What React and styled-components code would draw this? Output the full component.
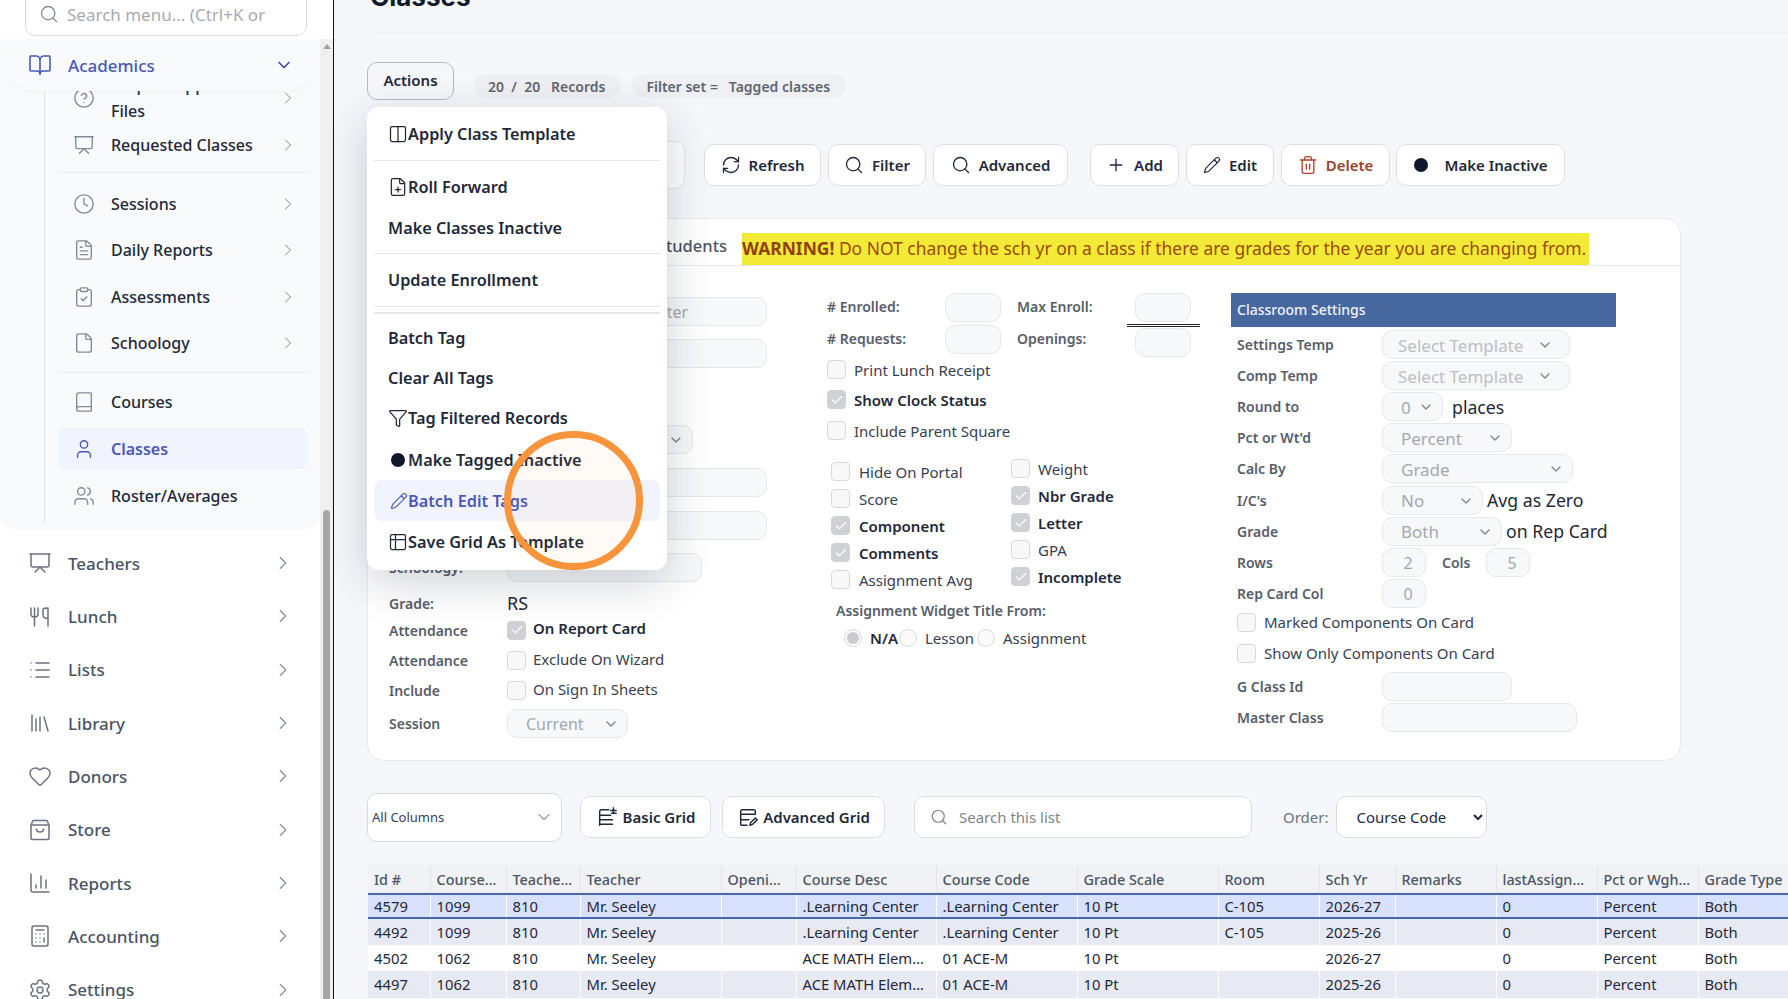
import React from 'react';
import styled, { createGlobalStyle } from 'styled-components';
import {
  BookOpen, ChevronDown, ChevronRight, CircleHelp, Presentation, Clock, FileText, ClipboardCheck,
  File, Book, User, Users, List, Library, Heart, ChartColumn, Calculator, Settings, Search,
  RefreshCw, Plus, Pencil, Trash2, Check, Columns2, FilePlus, Funnel, Table2,
} from 'lucide-react';

const GlobalStyle = createGlobalStyle`
  html, body { margin: 0; padding: 0; height: 100%; overflow: hidden; }
  body { font-family: "Noto Sans", "Open Sans", sans-serif; background: #f6f7fb; color: #1f2937; }
  * { box-sizing: border-box; }
`;

const Shell = styled.div`
  display: flex;
  width: 1788px;
  height: 999px;
  overflow: hidden;
`;

/* ---------- sidebar ---------- */

const Sidebar = styled.aside`
  width: 334px;
  flex-shrink: 0;
  height: 999px;
  background: #fff;
  border-right: 1px solid #111;
  display: flex;
  flex-direction: column;
  overflow: hidden;
`;

const SearchArea = styled.div`
  height: 39px;
  flex-shrink: 0;
  padding: 0 26px 0 25px;
`;

const SearchBox = styled.div`
  height: 48px;
  margin-top: -12px;
  border: 1px solid #d9dce1;
  border-radius: 10px;
  display: flex;
  align-items: center;
  gap: 8px;
  padding: 4px 0 0 13px;
  font-size: 17px;
  color: #a8abb0;
  background: #fff;
  white-space: nowrap;
`;

const SideBody = styled.div`
  flex: 1;
  display: flex;
  min-height: 0;
`;

const NavCol = styled.div`
  width: 320px;
  flex-shrink: 0;
`;

const ScrollTrack = styled.div`
  width: 13px;
  background: #f0f0f0;
  padding: 5px 3px 0;
  display: flex;
  flex-direction: column;
  align-items: center;
`;

const ScrollArrow = styled.div`
  width: 0;
  height: 0;
  border-left: 4px solid transparent;
  border-right: 4px solid transparent;
  border-bottom: 5px solid #a3a3a3;
`;

const ScrollThumb = styled.div`
  width: 7px;
  height: 489px;
  margin-top: 461px;
  background: #a6a6a6;
  border-radius: 4px 4px 0 0;
`;

const AcademicSection = styled.div`
  height: 491px;
  margin-bottom: 6.5px;
  background: #f8fafc;
  border-radius: 0 0 18px 18px;
  position: relative;
  overflow: hidden;
`;

const AcademicHead = styled.div`
  height: 52px;
  margin-left: 12px;
  width: 296px;
  padding: 0 14px 0 16px;
  display: flex;
  align-items: center;
  gap: 16px;
  color: #4a59b5;
  font-size: 17px;
  font-weight: 500;
  background: #f8fafc;
  border-radius: 0 0 18px 18px;
  box-shadow: 0 1px 2px rgba(15, 23, 42, 0.04);
  position: relative;
  z-index: 2;
  svg:last-child { margin-left: auto; color: #3f4aa8; }
`;

const SubList = styled.div`
  margin-left: 44px;
  height: 444px;
  margin-top: -13px;
  border-left: 1px solid #dde1e7;
  overflow: hidden;
  padding: 1.5px 11px 0 13px;
`;

const SubItem = styled.div`
  height: 41px;
  margin-top: ${(p) => p.$mt ?? 5.6}px;
  padding: 0 10px 0 15px;
  width: 250px;
  display: flex;
  align-items: center;
  gap: 16px;
  border-radius: 8px;
  font-size: 16px;
  line-height: 26px;
  color: ${(p) => (p.$active ? '#4a59b5' : '#1f2937')};
  background: ${(p) => (p.$active ? '#f1f4fd' : 'transparent')};
  font-weight: ${(p) => (p.$active ? 600 : 500)};
  > svg:first-child { color: ${(p) => (p.$active ? '#4a59b5' : '#858a94')}; flex-shrink: 0; }
`;

const SubArrow = styled(ChevronRight)`
  margin-left: auto;
  color: #9a9ea6;
  flex-shrink: 0;
`;

const SubDivider = styled.div`
  height: 1px;
  width: 253px;
  background: #e9ecf0;
  margin-top: ${(p) => p.$mt ?? 7}px;
  margin-bottom: ${(p) => p.$mb ?? 4}px;
`;

const TopItem = styled.div`
  height: 53.33px;
  padding: 0 26px 0 28px;
  display: flex;
  align-items: center;
  gap: 16px;
  font-size: 17px;
  font-weight: 500;
  color: #4b5563;
  > svg:first-child { color: #6b7280; flex-shrink: 0; }
`;

const TopArrow = styled(ChevronRight)`
  margin-left: auto;
  color: #868b94;
`;

/* ---------- main ---------- */

const Main = styled.main`
  flex: 1;
  min-width: 0;
  height: 999px;
  position: relative;
  overflow: hidden;
  padding-left: 33px;
`;

const PageTitle = styled.h1`
  margin: -26px 0 0 3px;
  height: 60px;
  line-height: 46px;
  font-family: Inter, sans-serif;
  font-size: 26px;
  font-weight: 700;
  color: #111827;
  border-bottom: 1px solid #eceef2;
`;

const ActionRow = styled.div`
  display: flex;
  align-items: flex-end;
  gap: 20px;
  margin-top: 28px;
  height: 38px;
`;

const ActionsWrap = styled.div`
  position: relative;
  width: 87px;
  height: 38px;
`;

const ActionsButton = styled.div`
  height: 38px;
  width: 87px;
  border: 1px solid #b6bac2;
  border-radius: 10px;
  display: flex;
  align-items: center;
  justify-content: center;
  font-weight: 600;
  font-size: 15px;
  padding-bottom: 3px;
`;

const Chips = styled.div`
  display: flex;
  gap: 11px;
  margin-bottom: 2px;
`;

const Chip = styled.div`
  height: 24px;
  border-radius: 12px;
  background: #eff0f4;
  color: #5f6670;
  font-size: 14px;
  font-weight: 600;
  display: flex;
  align-items: center;
  padding: 0 16px 0 14px;
  white-space: pre;
`;

const Menu = styled.div`
  position: absolute;
  top: 45px;
  left: 0;
  width: 300px;
  height: 463px;
  background: #fff;
  border-radius: 12px;
  padding: 6px 7px 0;
  box-shadow: 0 12px 45px rgba(17, 24, 39, 0.2);
  z-index: 10;
`;

const MenuItem = styled.div`
  height: 41px;
  margin-top: ${(p) => p.$mt ?? 0}px;
  display: flex;
  align-items: center;
  padding-left: 14px;
  border-radius: 8px;
  font-size: 16.3px;
  font-weight: 600;
  color: ${(p) => (p.$active ? '#4a59b5' : '#1f2937')};
  background: ${(p) => (p.$active ? '#f1f4fd' : 'transparent')};
  white-space: nowrap;
  svg { flex-shrink: 0; }
`;

const MenuDot = styled.span`
  width: 14px;
  height: 14px;
  margin: 0 3px;
  border-radius: 50%;
  background: #0f172a;
  flex-shrink: 0;
`;

const MenuPencil = styled(Pencil)`
  margin: 0 0 0 2px;
`;

const MenuLine = styled.div`
  height: ${(p) => p.$h ?? 1}px;
  background: #e5e7eb;
  margin-top: ${(p) => p.$mt ?? 5}px;
  margin-bottom: ${(p) => p.$mb ?? 6}px;
`;

const Circle = styled.div`
  position: absolute;
  left: 170px;
  top: 431px;
  width: 139px;
  height: 139px;
  border-radius: 50%;
  border: 7px solid #f7943c;
  background: rgba(247, 148, 60, 0.05);
  z-index: 20;
`;

const Toolbar = styled.div`
  display: flex;
  align-items: center;
  margin-top: 41px;
  height: 48px;
`;

const HiddenSearch = styled.div`
  width: 318px;
  height: 48px;
  background: #fff;
  border: 1px solid #e2e4e9;
  border-radius: 10px;
  margin-right: 19px;
`;

const ToolButton = styled.div`
  width: ${(p) => p.$w}px;
  height: 42px;
  margin-right: ${(p) => p.$mr ?? 7}px;
  background: #fff;
  border: 1px solid #dcdfe4;
  border-radius: 10px;
  display: flex;
  align-items: center;
  justify-content: center;
  gap: ${(p) => p.$gap ?? 8}px;
  font-size: 15px;
  font-weight: 600;
  color: ${(p) => p.$color ?? '#1f2937'};
  white-space: nowrap;
  flex-shrink: 0;
`;

const Dot = styled.span`
  width: 14px;
  height: 14px;
  border-radius: 50%;
  background: #0f172a;
  flex-shrink: 0;
`;

const Card = styled.section`
  width: 1314px;
  height: 543px;
  margin-top: 29px;
  background: #fff;
  border: 1px solid #e7e9ed;
  border-radius: 16px;
`;

const TabRow = styled.div`
  height: 47px;
  display: flex;
  border-bottom: 1px solid #e7e9ed;
`;

const TabList = styled.div`
  width: 374px;
  display: flex;
  justify-content: flex-end;
  align-items: center;
  padding: 6px 15px 0 0;
  font-size: 16.5px;
  font-weight: 500;
  color: #4b5563;
`;

const Warning = styled.div`
  margin-top: 14px;
  height: 32px;
  width: 847px;
  background: #f2ea36;
  color: #9a4a0c;
  font-size: 17.46px;
  line-height: 30px;
  white-space: nowrap;
  b { font-weight: 700; color: #92400e; }
`;

const CardBody = styled.div`
  display: flex;
  align-items: flex-start;
`;

const LeftCol = styled.div`
  width: 459px;
  padding: 31px 0 0 21px;
`;

const MidCol = styled.div`
  width: 404px;
  padding-top: 27px;
`;

const RightCol = styled.div`
  width: 386px;
  padding-top: 27px;
`;

const FormRow = styled.div`
  display: flex;
  align-items: center;
  height: ${(p) => p.$h ?? 29}px;
  margin-top: ${(p) => p.$mt ?? 0}px;
  padding-left: ${(p) => p.$pl ?? 0}px;
`;

const Label = styled.div`
  width: ${(p) => p.$w ?? 118}px;
  margin-left: ${(p) => p.$ml ?? 0}px;
  padding-bottom: ${(p) => p.$lift ?? 0}px;
  flex-shrink: 0;
  font-size: 14px;
  font-weight: 600;
  color: #575e68;
  white-space: nowrap;
`;

const Field = styled.div`
  width: ${(p) => p.$w}px;
  height: 29px;
  flex-shrink: 0;
  background: #f7f8fa;
  border: 1px solid #e4e7eb;
  border-radius: 10px;
  font-size: ${(p) => p.$fs ?? 16}px;
  color: ${(p) => (p.$faint ? '#bcbfc4' : '#a4a8ae')};
  display: flex;
  align-items: center;
  justify-content: ${(p) => (p.$center ? 'center' : 'flex-start')};
  padding: ${(p) => (p.$center ? '2px 0 0 8px' : `1px ${p.$pr ?? 8}px 0 ${p.$pl ?? 15}px`)};
  margin-top: ${(p) => p.$mt ?? 0}px;
  white-space: nowrap;
  svg { margin-left: auto; color: #80858c; flex-shrink: 0; }
`;

const BoxMark = styled.span`
  width: 19px;
  height: 19px;
  flex-shrink: 0;
  border-radius: 4px;
  background: ${(p) => (p.$on ? '#cfd1d4' : '#f8f8f9')};
  border: 1px solid ${(p) => (p.$on ? '#cfd1d4' : '#d7d9dd')};
  display: inline-flex;
  align-items: center;
  justify-content: center;
  color: #fff;
`;

const CheckRow = styled.div`
  display: flex;
  align-items: center;
  gap: ${(p) => p.$gap ?? 8}px;
  height: ${(p) => p.$h ?? 27}px;
  margin-top: ${(p) => p.$mt ?? 0}px;
  font-size: 15px;
  font-weight: ${(p) => (p.$on ? 600 : 400)};
  color: ${(p) => (p.$on ? '#1f2937' : '#374151')};
  white-space: nowrap;
`;

const CheckText = styled.span`
  margin-bottom: ${(p) => p.$lift ?? 0}px;
`;

const FlagColumns = styled.div`
  display: flex;
  margin-top: 14px;
  padding-left: 4px;
`;

const FlagCol = styled.div`
  width: ${(p) => p.$w}px;
  margin-top: ${(p) => p.$mt ?? 0}px;
`;

const DoubleRule = styled.div`
  position: absolute;
  left: -8px;
  bottom: -5px;
  width: 73px;
  height: 3px;
  border-top: 1px solid #222;
  border-bottom: 1px solid #222;
`;

const RuleAnchor = styled.div`
  position: relative;
`;

const RadioRow = styled.div`
  display: flex;
  align-items: center;
  margin-top: 8px;
  padding-left: 17px;
  height: 20px;
  font-size: 15px;
  color: #374151;
  white-space: nowrap;
`;

const Radio = styled.span`
  width: 18px;
  height: 18px;
  border-radius: 50%;
  border: 1px solid #d7d9dd;
  background: #fafafa;
  margin-right: 8px;
  flex-shrink: 0;
  display: inline-flex;
  align-items: center;
  justify-content: center;
  &::after {
    content: '';
    display: ${(p) => (p.$on ? 'block' : 'none')};
    width: 12px;
    height: 12px;
    border-radius: 50%;
    background: #c9cbcf;
  }
`;

const RadioText = styled.span`
  font-weight: ${(p) => (p.$on ? 600 : 400)};
  color: ${(p) => (p.$on ? '#1f2937' : '#374151')};
  margin-right: ${(p) => p.$mr}px;
`;

const SettingsHead = styled.div`
  height: 34px;
  width: 385px;
  background: #46689f;
  color: #f1f4f9;
  font-size: 14px;
  font-weight: 500;
  line-height: 34px;
  padding-left: 6px;
`;

const SettingRow = styled.div`
  display: flex;
  align-items: center;
  height: 31.1px;
  padding-left: 6px;
  margin-top: ${(p) => p.$mt ?? 0}px;
`;

const Suffix = styled.span`
  font-size: 17.7px;
  color: #1f2937;
  margin-left: ${(p) => p.$ml}px;
  white-space: nowrap;
`;

const ColsLabel = styled(Label)`
  margin: 0 15px 0 16px;
  width: 29px;
`;

const PlainValue = styled.div`
  font-size: 18px;
  color: #1f2937;
`;

/* ---------- grid controls ---------- */

const GridBar = styled.div`
  display: flex;
  align-items: center;
  margin-top: 31px;
  height: 50px;
`;

const ColumnsSelect = styled.div`
  width: 195px;
  height: 49px;
  background: #fff;
  border: 1px solid #d7dae0;
  border-radius: 10px;
  display: flex;
  align-items: center;
  padding: 0 7px 0 4px;
  font-size: 13px;
  color: #374151;
  margin-right: 18px;
  svg { margin-left: auto; color: #6b7280; }
`;

const ListSearch = styled.div`
  width: 338px;
  height: 42px;
  margin-left: 22px;
  background: #fff;
  border: 1px solid #d9dce1;
  border-radius: 10px;
  display: flex;
  align-items: center;
  gap: 11px;
  padding-left: 15px;
  font-size: 15px;
  color: #80858c;
`;

const OrderLabel = styled.span`
  margin: 0 7px 0 31px;
  font-size: 15px;
  color: #6b7280;
`;

const OrderSelect = styled.select`
  width: 151px;
  height: 42px;
  background: #fff;
  border: 1px solid #d9dce1;
  border-radius: 10px;
  padding-left: 16px;
  font-family: inherit;
  font-size: 15px;
  color: #1f2937;
`;

const Grid = styled.table`
  width: 1436px;
  margin: 23px 0 0 1px;
  border-collapse: collapse;
  table-layout: fixed;
  font-size: 14.8px;
  color: #1f2937;
`;

const HeadCell = styled.th`
  height: 29px;
  padding: 0 6px;
  background: #f1f2f5;
  border-right: 1px solid #e2e4e9;
  border-bottom: 2px solid #4668b0;
  text-align: left;
  font-size: 14.4px;
  font-weight: 500;
  color: #4b5563;
  white-space: nowrap;
  overflow: hidden;
  text-overflow: ellipsis;
`;

const GridRow = styled.tr`
  background: ${(p) => (p.$selected ? '#d8e1fb' : p.$odd ? '#e7e9f3' : '#fff')};
  td {
    height: ${(p) => (p.$selected ? 24 : 26.5)}px;
    border-bottom: ${(p) => (p.$selected ? '2px solid #4668b0' : 'none')};
  }
`;

const GridCell = styled.td`
  padding: 0 6px;
  border-right: 1px solid rgba(255, 255, 255, 0.7);
  white-space: nowrap;
  overflow: hidden;
  text-overflow: ellipsis;
`;

/* ---------- small drawings that no icon package has ---------- */

const ForkKnife = () => (
  <svg width="24" height="24" viewBox="0 0 24 24" fill="none" stroke="currentColor" strokeWidth="1.5" strokeLinecap="round" strokeLinejoin="round">
    <path d="M3 4v6c0 2 1 3 3.500 3s3.500-1 3.500-3V4M6.500 4v18M15 6v5c0 2.500 1.500 3.500 5 3.500V4c-3.500 0-5 0-5 2zM20 4v18" />
  </svg>
);

const BagIcon = () => (
  <svg width="24" height="24" viewBox="0 0 24 24" fill="none" stroke="currentColor" strokeWidth="1.5" strokeLinecap="round" strokeLinejoin="round">
    <path d="M5 2.500h14l2 4.500v13a1.500 1.500 0 0 1-1.500 1.500h-15A1.500 1.500 0 0 1 3 20V7zM3 7h18M8.500 11c0 2 1.500 3 3.500 3s3.500-1 3.500-3" />
  </svg>
);

const BasicGridIcon = () => (
  <svg width="22" height="22" viewBox="0 0 24 24" fill="none" stroke="currentColor" strokeWidth="1.6" strokeLinecap="round" strokeLinejoin="round">
    <path d="M14 4H6a2 2 0 0 0-2 2v15M4 10h12M4 15h14M4 20h14M19 2v6M16 5h6M17 8h5" />
  </svg>
);

const AdvGridIcon = () => (
  <svg width="22" height="22" viewBox="0 0 24 24" fill="none" stroke="currentColor" strokeWidth="1.6" strokeLinecap="round" strokeLinejoin="round">
    <path d="M20 9V6a2 2 0 0 0-2-2H6a2 2 0 0 0-2 2v14a1 1 0 0 0 1 1h6M4 9h16M4 15h9M14 21l1-3 5-5 2 2-5 5z" />
  </svg>
);

/* ---------- data ---------- */

const subGroups = [
  [
    { icon: CircleHelp, label: <>Help &amp; Support<br />Files</>, arrow: true, mt: -2 },
    { icon: Presentation, label: 'Requested Classes', arrow: true, mt: 5.6 },
  ],
  [
    { icon: Clock, label: 'Sessions', arrow: true, mt: 0 },
    { icon: FileText, label: 'Daily Reports', arrow: true },
    { icon: ClipboardCheck, label: 'Assessments', arrow: true },
    { icon: File, label: 'Schoology', arrow: true },
  ],
  [
    { icon: Book, label: 'Courses', mt: 0 },
    { icon: User, label: 'Classes', active: true },
    { icon: Users, label: 'Roster/Averages' },
  ],
];

const topNav = [
  { icon: Presentation, label: 'Teachers' },
  { icon: ForkKnife, label: 'Lunch' },
  { icon: List, label: 'Lists' },
  { icon: Library, label: 'Library' },
  { icon: Heart, label: 'Donors' },
  { icon: BagIcon, label: 'Store' },
  { icon: ChartColumn, label: 'Reports' },
  { icon: Calculator, label: 'Accounting' },
  { icon: Settings, label: 'Settings' },
];

const columnWidths = [62, 76, 74, 141, 75, 140, 141, 141, 101, 76, 101, 101, 101, 106];
const columnNames = ['Id #', 'Course ID', 'Teacher ID', 'Teacher', 'Openings', 'Course Desc', 'Course Code', 'Grade Scale', 'Room', 'Sch Yr', 'Remarks', 'lastAssignment', 'Pct or Wghted', 'Grade Type'];

const rows = [
  ['4579', '1099', '810', 'Mr. Seeley', '', '.Learning Center', '.Learning Center', '10 Pt', 'C-105', '2026-27', '', '0', 'Percent', 'Both'],
  ['4492', '1099', '810', 'Mr. Seeley', '', '.Learning Center', '.Learning Center', '10 Pt', 'C-105', '2025-26', '', '0', 'Percent', 'Both'],
  ['4502', '1062', '810', 'Mr. Seeley', '', 'ACE MATH Elementary', '01 ACE-M', '10 Pt', '', '2026-27', '', '0', 'Percent', 'Both'],
  ['4497', '1062', '810', 'Mr. Seeley', '', 'ACE MATH Elementary', '01 ACE-M', '10 Pt', '', '2025-26', '', '0', 'Percent', 'Both'],
];

const CheckItem = ({ label, on, lift, ...rest }) => (
  <CheckRow $on={on} {...rest}>
    <BoxMark $on={on}>{on && <Check size={14} strokeWidth={2} />}</BoxMark>
    <CheckText $lift={lift}>{label}</CheckText>
  </CheckRow>
);

const Caret = () => <ChevronDown size={16} strokeWidth={2} />;

const App = () => (
  <Shell>
    <GlobalStyle />
    <Sidebar>
      <SearchArea>
        <SearchBox>
          <Search size={20} color="#858a94" strokeWidth={1.6} />
          Search menu... (Ctrl+K or
        </SearchBox>
      </SearchArea>
      <SideBody>
        <NavCol>
          <AcademicSection>
            <AcademicHead>
              <BookOpen size={24} strokeWidth={1.6} />
              Academics
              <ChevronDown size={20} strokeWidth={2} />
            </AcademicHead>
            <SubList>
              {subGroups.map((group, g) => (
                <React.Fragment key={g}>
                  {group.map((item, i) => {
                    const Icon = item.icon;
                    return (
                      <SubItem key={i} $active={item.active} $mt={item.mt}>
                        <Icon size={22} strokeWidth={1.5} />
                        <span>{item.label}</span>
                        {item.arrow && <SubArrow size={20} strokeWidth={1.25} />}
                      </SubItem>
                    );
                  })}
                  {g < 2 && <SubDivider $mt={g === 0 ? 6.5 : 8.5} $mb={g === 0 ? 10.5 : 8.5} />}
                </React.Fragment>
              ))}
            </SubList>
          </AcademicSection>
          {topNav.map((item) => {
            const Icon = item.icon;
            return (
              <TopItem key={item.label}>
                <Icon size={24} strokeWidth={1.5} />
                {item.label}
                <TopArrow size={22} strokeWidth={1.25} />
              </TopItem>
            );
          })}
        </NavCol>
        <ScrollTrack>
          <ScrollArrow />
          <ScrollThumb />
        </ScrollTrack>
      </SideBody>
    </Sidebar>

    <Main>
      <PageTitle>Classes</PageTitle>

      <ActionRow>
        <ActionsWrap>
          <ActionsButton>Actions</ActionsButton>
          <Menu>
            <MenuItem><Columns2 size={20} strokeWidth={1.5} />Apply Class Template</MenuItem>
            <MenuLine $mt={6} $mb={5} />
            <MenuItem><FilePlus size={20} strokeWidth={1.5} />Roll Forward</MenuItem>
            <MenuItem>Make Classes Inactive</MenuItem>
            <MenuLine $mt={5} $mb={5} />
            <MenuItem>Update Enrollment</MenuItem>
            <MenuLine $mt={6} $mb={5} />
            <MenuLine $h={2} $mt={0} $mb={3} />
            <MenuItem>Batch Tag</MenuItem>
            <MenuItem $mt={-1}>Clear All Tags</MenuItem>
            <MenuItem $mt={-1}><Funnel size={20} strokeWidth={1.5} />Tag Filtered Records</MenuItem>
            <MenuItem $mt={1}><MenuDot />Make Tagged Inactive</MenuItem>
            <MenuItem $active><MenuPencil size={18} strokeWidth={1.5} />Batch Edit Tags</MenuItem>
            <MenuItem><Table2 size={20} strokeWidth={1.5} />Save Grid As Template</MenuItem>
          </Menu>
        </ActionsWrap>
        <Chips>
          <Chip>20  /  20   Records</Chip>
          <Chip>Filter set =   Tagged classes</Chip>
        </Chips>
      </ActionRow>

      <Toolbar>
        <HiddenSearch />
        <ToolButton $w={117}><RefreshCw size={20} strokeWidth={1.6} />Refresh</ToolButton>
        <ToolButton $w={98}><Search size={20} strokeWidth={1.6} />Filter</ToolButton>
        <ToolButton $w={135} $mr={22}><Search size={20} strokeWidth={1.6} />Advanced</ToolButton>
        <ToolButton $w={89}><Plus size={20} strokeWidth={1.6} />Add</ToolButton>
        <ToolButton $w={88}><Pencil size={18} strokeWidth={1.6} />Edit</ToolButton>
        <ToolButton $w={109} $mr={6} $color="#9a3f2c"><Trash2 size={20} strokeWidth={1.6} color="#b4402c" />Delete</ToolButton>
        <ToolButton $w={169} $gap={17}><Dot />Make Inactive</ToolButton>
      </Toolbar>

      <Card>
        <TabRow>
          <TabList>Students</TabList>
          <Warning><b>WARNING!</b> Do NOT change the sch yr on a class if there are grades for the year you are changing from.</Warning>
        </TabRow>
        <CardBody>
          <LeftCol>
            <FormRow><Label /><Field $w={260} $pl={140}>Enter</Field></FormRow>
            <FormRow $mt={13}><Label /><Field $w={260} /></FormRow>
            <FormRow $mt={57}><Label /><Field $w={186}><Caret /></Field></FormRow>
            <FormRow $mt={14}><Label /><Field $w={260} /></FormRow>
            <FormRow $mt={14}><Label /><Field $w={260} /></FormRow>
            <FormRow $mt={13}><Label>Schoology:</Label><Field $w={195} /></FormRow>
            <FormRow $h={26} $mt={8}><Label>Grade:</Label><PlainValue>RS</PlainValue></FormRow>
            <FormRow $h={20} $mt={4}><Label>Attendance</Label><CheckItem on lift={5} label="On Report Card" $h={20} $gap={7} /></FormRow>
            <FormRow $h={20} $mt={10}><Label>Attendance</Label><CheckItem lift={3} label="Exclude On Wizard" $h={20} $gap={7} /></FormRow>
            <FormRow $h={20} $mt={10}><Label>Include</Label><CheckItem lift={3} label="On Sign In Sheets" $h={20} $gap={7} /></FormRow>
            <FormRow $mt={9}><Label>Session</Label><Field $w={121} $pl={18}>Current<Caret /></Field></FormRow>
          </LeftCol>

          <MidCol>
            <FormRow>
              <Label $lift={2}># Enrolled:</Label>
              <Field $w={56} />
              <Label $ml={16} $lift={2}>Max Enroll:</Label>
              <RuleAnchor>
                <Field $w={56} />
                <DoubleRule />
              </RuleAnchor>
            </FormRow>
            <FormRow $mt={3}>
              <Label $lift={2}># Requests:</Label>
              <Field $w={56} />
              <Label $ml={16} $lift={2}>Openings:</Label>
              <Field $w={56} $mt={6} />
            </FormRow>
            <CheckItem label="Print Lunch Receipt" $mt={2} />
            <CheckItem on label="Show Clock Status" $mt={3} />
            <CheckItem label="Include Parent Square" $mt={4} />
            <FlagColumns>
              <FlagCol $w={180}>
                <CheckItem label="Hide On Portal" $gap={9} />
                <CheckItem label="Score" $gap={9} />
                <CheckItem on label="Component" $gap={9} />
                <CheckItem on label="Comments" $gap={9} />
                <CheckItem label="Assignment Avg" $gap={9} />
              </FlagCol>
              <FlagCol $w={180} $mt={-3}>
                <CheckItem label="Weight" />
                <CheckItem on label="Nbr Grade" />
                <CheckItem on label="Letter" />
                <CheckItem label="GPA" />
                <CheckItem on label="Incomplete" />
              </FlagCol>
            </FlagColumns>
            <FormRow $h={20} $mt={7} $pl={9}><Label $w={300}>Assignment Widget Title From:</Label></FormRow>
            <RadioRow>
              <Radio $on /><RadioText $on $mr={1}>N/A</RadioText>
              <Radio /><RadioText $mr={3}>Lesson</RadioText>
              <Radio /><RadioText>Assignment</RadioText>
            </RadioRow>
          </MidCol>

          <RightCol>
            <SettingsHead>Classroom Settings</SettingsHead>
            <SettingRow $mt={2}><Label $w={145}>Settings Temp</Label><Field $w={188} $fs={17} $faint $pr={16}>Select Template<Caret /></Field></SettingRow>
            <SettingRow><Label $w={145}>Comp Temp</Label><Field $w={188} $fs={17} $faint $pr={16}>Select Template<Caret /></Field></SettingRow>
            <SettingRow><Label $w={145}>Round to</Label><Field $w={61} $fs={17} $pl={18}>0<Caret /></Field><Suffix $ml={9}>places</Suffix></SettingRow>
            <SettingRow><Label $w={145}>Pct or Wt'd</Label><Field $w={130} $fs={17} $pl={18}>Percent<Caret /></Field></SettingRow>
            <SettingRow><Label $w={145}>Calc By</Label><Field $w={191} $fs={17} $pl={18}>Grade<Caret /></Field></SettingRow>
            <SettingRow><Label $w={145}>I/C's</Label><Field $w={101} $fs={17} $pl={18}>No<Caret /></Field><Suffix $ml={4}>Avg as Zero</Suffix></SettingRow>
            <SettingRow><Label $w={145}>Grade</Label><Field $w={120} $fs={17} $pl={18}>Both<Caret /></Field><Suffix $ml={4}>on Rep Card</Suffix></SettingRow>
            <SettingRow><Label $w={145}>Rows</Label><Field $w={44} $center>2</Field><ColsLabel>Cols</ColsLabel><Field $w={44} $center>5</Field></SettingRow>
            <SettingRow><Label $w={145}>Rep Card Col</Label><Field $w={44} $center>0</Field></SettingRow>
            <SettingRow $mt={-2}><CheckItem label="Marked Components On Card" /></SettingRow>
            <SettingRow><CheckItem label="Show Only Components On Card" /></SettingRow>
            <SettingRow $mt={2}><Label $w={145}>G Class Id</Label><Field $w={130} /></SettingRow>
            <SettingRow><Label $w={145}>Master Class</Label><Field $w={195} /></SettingRow>
          </RightCol>
        </CardBody>
      </Card>

      <GridBar>
        <ColumnsSelect>All Columns<ChevronDown size={20} strokeWidth={1.25} /></ColumnsSelect>
        <ToolButton $w={131} $mr={11} $gap={5}><BasicGridIcon />Basic Grid</ToolButton>
        <ToolButton $w={163} $mr={7} $gap={4}><AdvGridIcon />Advanced Grid</ToolButton>
        <ListSearch><Search size={18} strokeWidth={1.6} />Search this list</ListSearch>
        <OrderLabel>Order:</OrderLabel>
        <OrderSelect defaultValue="Course Code"><option>Course Code</option></OrderSelect>
      </GridBar>

      <Grid>
        <colgroup>
          {columnWidths.map((w, i) => <col key={i} style={{ width: w }} />)}
        </colgroup>
        <thead>
          <tr>{columnNames.map((name) => <HeadCell key={name}>{name}</HeadCell>)}</tr>
        </thead>
        <tbody>
          {rows.map((row, r) => (
            <GridRow key={r} $selected={r === 0} $odd={r % 2 === 1}>
              {row.map((value, c) => <GridCell key={c}>{value}</GridCell>)}
            </GridRow>
          ))}
        </tbody>
      </Grid>

      <Circle />
    </Main>
  </Shell>
);

export default App;
